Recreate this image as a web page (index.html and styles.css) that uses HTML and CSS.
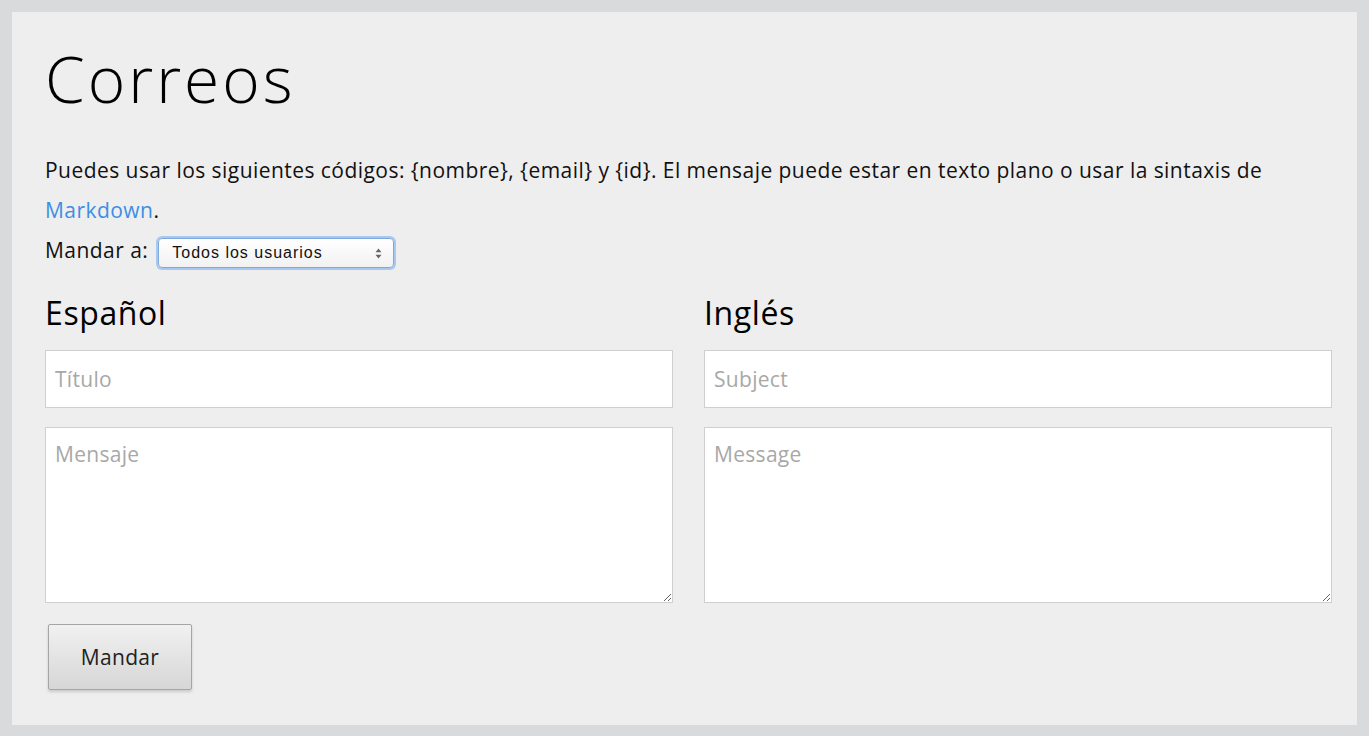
FILE: index.html
```html
<!DOCTYPE html>
<html lang="es">
<head>
<meta charset="utf-8">
<title>Correos</title>
<link rel="stylesheet" href="styles.css">
</head>
<body>
<main class="panel">
  <h1 class="title">Correos</h1>
  <p class="intro">Puedes usar los siguientes códigos: {nombre}, {email} y {id}. El mensaje puede estar en texto plano o usar la sintaxis de <a href="#" class="link">Markdown</a>.</p>
  <div class="sendto">
    <label class="sendto-label">Mandar a:</label>
    <div class="select">
      <span>Todos los usuarios</span>
      <svg class="arrows" width="7" height="11" viewBox="0 0 7 11"><path d="M0.5 4.2 L3.5 0.5 L6.5 4.2 Z M0.5 6.8 L3.5 10.5 L6.5 6.8 Z" fill="#666"/></svg>
    </div>
  </div>
  <div class="columns">
    <section class="col">
      <h2 class="lang">Español</h2>
      <input class="field" type="text" placeholder="Título">
      <textarea class="area" placeholder="Mensaje"></textarea>
    </section>
    <section class="col">
      <h2 class="lang">Inglés</h2>
      <input class="field" type="text" placeholder="Subject">
      <textarea class="area" placeholder="Message"></textarea>
    </section>
  </div>
  <button class="btn" type="button">Mandar</button>
</main>
</body>
</html>
```
FILE: styles.css
```css
html, body {
  margin: 0;
  padding: 0;
}
body {
  background: #d9dadc;
  padding: 12px 12px 11px 12px;
  font-family: "Open Sans", "Noto Sans", sans-serif;
  color: #111;
  box-sizing: border-box;
  height: 736px;
}
.panel {
  background: #eeeeee;
  height: 713px;
  box-sizing: border-box;
  padding: 27px 25px 0 33px;
}
.title {
  margin: 0;
  font-weight: 300;
  font-size: 64px;
  line-height: 80px;
  letter-spacing: 3px;
  color: #000;
}
.intro {
  margin: 31px 0 0 0;
  font-size: 21px;
  line-height: 40px;
  letter-spacing: 0.45px;
}
.link {
  color: #3b8ee6;
  text-decoration: none;
}
.sendto {
  display: flex;
  align-items: flex-start;
  gap: 10px;
  height: 40px;
}
.sendto-label {
  font-size: 21px;
  line-height: 40px;
  letter-spacing: 0.45px;
}
.select {
  margin-top: 8px;
  width: 236px;
  height: 30px;
  box-sizing: border-box;
  border: 1px solid #7fa9dc;
  border-radius: 4px;
  box-shadow: 0 0 0 2px #a9c8ef;
  background: linear-gradient(#ffffff, #f1f1f1);
  display: flex;
  align-items: center;
  justify-content: space-between;
  padding: 0 11px 0 13px;
  font-family: "Liberation Sans", Arial, sans-serif;
  font-size: 16px;
  letter-spacing: 1px;
  color: #111;
}
.arrows { display: block; }
.columns {
  display: grid;
  grid-template-columns: 628px 628px;
  column-gap: 31px;
  margin-top: 21px;
}
.col {
  display: flex;
  flex-direction: column;
}
.lang {
  margin: 0;
  font-weight: 400;
  font-size: 32px;
  line-height: 44px;
  letter-spacing: 0.6px;
  color: #000;
  height: 59px;
}
.field, .area {
  font-family: "Open Sans", "Noto Sans", sans-serif;
  font-size: 21px;
  letter-spacing: 0.3px;
  border: 1px solid #cfcfcf;
  background: #fff;
  box-sizing: border-box;
  width: 100%;
  padding: 0 9px;
  color: #333;
  outline: none;
}
.field {
  height: 58px;
}
.area {
  height: 176px;
  margin-top: 19px;
  padding-top: 12px;
  resize: vertical;
}
.field::placeholder, .area::placeholder {
  color: #a8a8a8;
}
.btn {
  margin: 21px 0 0 3px;
  width: 144px;
  height: 66px;
  font-family: "Open Sans", "Noto Sans", sans-serif;
  font-size: 21px;
  letter-spacing: 0.3px;
  color: #222;
  border: 1px solid #a5a5a5;
  border-radius: 2px;
  background: linear-gradient(#f1f1f1, #d6d6d6);
  box-shadow: 0 2px 3px rgba(0,0,0,0.15);
  cursor: pointer;
}
```
